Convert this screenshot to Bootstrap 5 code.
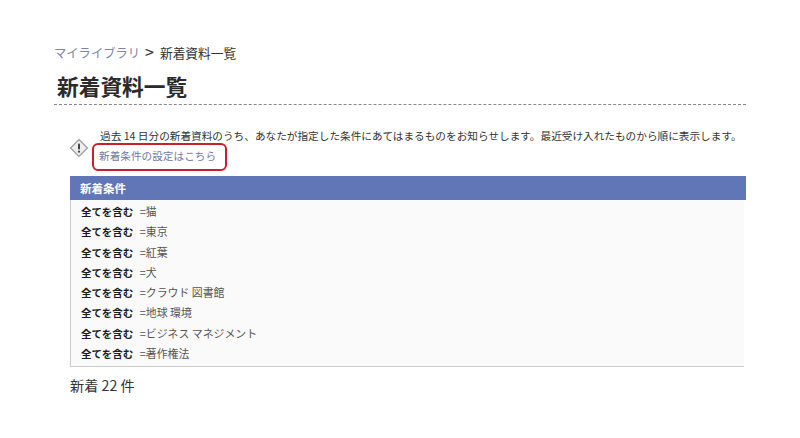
<!DOCTYPE html>
<html lang="ja">
<head>
<meta charset="utf-8">
<title>新着資料一覧</title>
<link rel="stylesheet" href="https://cdn.jsdelivr.net/npm/bootstrap@5.3.0/dist/css/bootstrap.min.css">
<style>
html,body{height:100%;background:#fff;overflow:hidden}
body{font-family:"Noto Sans CJK JP","Liberation Sans",sans-serif;color:#333}
.pagewrap{padding:42px 54px 0 54px}
.crumbs{font-size:12.7px;line-height:18px;color:#333}
.crumbs a{color:#7d84a8;text-decoration:none;font-size:12.3px}
.crumbs .sep{font-size:16px;margin:0 6px 0 5px;line-height:18px}
.pagetitle{font-size:21.7px;line-height:30px;font-weight:700;color:#2b2b2b;margin:9px 0 0 3px;padding:0}
.titlerule{border-top:1px dashed #888;margin-top:3px;margin-bottom:21px}
.noticewrap{margin-left:16px}
.noticeicon{width:20px;margin-top:12px;margin-right:9px;margin-left:-1px;flex:none}
.noticetext{font-size:10.65px;line-height:18px;color:#333;white-space:nowrap;padding-top:1px}
.noticeline{padding-left:2px}
.setlink{display:inline-block;color:#7379a6;text-decoration:none;border:2px solid #c8202c;border-radius:6px;padding:2px 6px 4px 5px;margin:-2px 0 0 -6px;width:135px;line-height:18px}
.condpanel{margin-left:16px;margin-top:5px}
.condhead{background:#6176b6;color:#fff;font-weight:700;font-size:11.5px;line-height:24px;height:24px;padding-left:10px}
.condbody{background:#fafafa;border-left:1px solid #ccc;border-bottom:1px solid #ccc;padding:1px 0 3px 10px;margin-right:2px}
.condrow{font-size:10.9px;height:20.3px;line-height:20.3px;color:#555;white-space:nowrap}
.condrow b{color:#1c1c1c;margin-right:4px;font-size:10.5px;line-height:1}
.hitcount{font-size:14.2px;line-height:20px;color:#333;margin:8px 0 0 16px}
</style>
</head>
<body>
<main class="pagewrap">
  <nav class="crumbs"><a href="#">マイライブラリ</a><span class="sep">&gt;</span>新着資料一覧</nav>
  <h1 class="pagetitle">新着資料一覧</h1>
  <div class="titlerule"></div>
  <div class="noticewrap d-flex">
    <svg class="noticeicon" viewBox="0 0 20 20" height="20" aria-hidden="true">
      <path d="M10 1.5 18.5 10 10 18.5 1.5 10Z" fill="#eeeeee" stroke="#9a9a9a" stroke-width="1.2"/>
      <rect x="9" y="5.5" width="2" height="6" rx=".8" fill="#444"/>
      <circle cx="10" cy="13.7" r="1.1" fill="#444"/>
    </svg>
    <div class="noticetext">
      <div class="noticeline">過去 14 日分の新着資料のうち、あなたが指定した条件にあてはまるものをお知らせします。最近受け入れたものから順に表示します。</div>
      <a class="setlink" href="#">新着条件の設定はこちら</a>
    </div>
  </div>
  <section class="condpanel">
    <div class="condhead">新着条件</div>
    <div class="condbody">
      <div class="condrow"><b>全てを含む</b> =猫</div>
      <div class="condrow"><b>全てを含む</b> =東京</div>
      <div class="condrow"><b>全てを含む</b> =紅葉</div>
      <div class="condrow"><b>全てを含む</b> =犬</div>
      <div class="condrow"><b>全てを含む</b> =クラウド 図書館</div>
      <div class="condrow"><b>全てを含む</b> =地球 環境</div>
      <div class="condrow"><b>全てを含む</b> =ビジネス マネジメント</div>
      <div class="condrow"><b>全てを含む</b> =著作権法</div>
    </div>
  </section>
  <p class="hitcount">新着 22 件</p>
</main>
</body>
</html>
